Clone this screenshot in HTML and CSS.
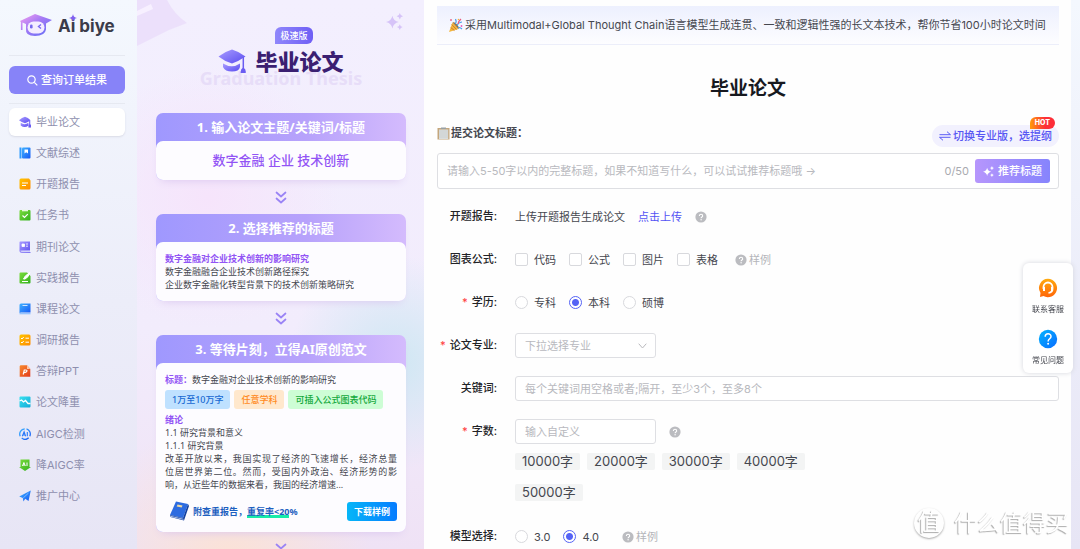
FILE: index.html
```
<!DOCTYPE html>
<html lang="zh-CN">
<head>
<meta charset="utf-8">
<title>Ai biye 毕业论文</title>
<link rel="stylesheet" href="styles.css">
</head>
<body>
<svg class="defs" aria-hidden="true">
  <defs>
    <linearGradient id="gp" x1="0" y1="0" x2="1" y2="1"><stop offset="0" stop-color="#a99cff"/><stop offset="1" stop-color="#5a4cf0"/></linearGradient>
    <linearGradient id="gb" x1="0" y1="0" x2="1" y2="1"><stop offset="0" stop-color="#3fb2ff"/><stop offset="1" stop-color="#1558f5"/></linearGradient>
    <linearGradient id="go" x1="0" y1="0" x2="1" y2="1"><stop offset="0" stop-color="#ffc400"/><stop offset="1" stop-color="#ff8a00"/></linearGradient>
    <linearGradient id="gg" x1="0" y1="0" x2="1" y2="1"><stop offset="0" stop-color="#7bdc3c"/><stop offset="1" stop-color="#32b01e"/></linearGradient>
    <linearGradient id="gr" x1="0" y1="0" x2="1" y2="1"><stop offset="0" stop-color="#f98a2b"/><stop offset="1" stop-color="#e23a1e"/></linearGradient>
    <linearGradient id="gc" x1="0" y1="0" x2="1" y2="1"><stop offset="0" stop-color="#39e2f0"/><stop offset="1" stop-color="#12a9d8"/></linearGradient>
    <linearGradient id="gl" x1="0" y1="0" x2="1" y2="1"><stop offset="0" stop-color="#f7a0f0"/><stop offset=".45" stop-color="#a47af5"/><stop offset="1" stop-color="#5b6cf6"/></linearGradient>
    <linearGradient id="gs" x1="0" y1="0" x2="0" y2="1"><stop offset="0" stop-color="#ffab10"/><stop offset="1" stop-color="#ff6508"/></linearGradient>
    <linearGradient id="gq" x1="0" y1="0" x2="1" y2="1"><stop offset="0" stop-color="#00b4ff"/><stop offset="1" stop-color="#0a6cff"/></linearGradient>
    <symbol id="chev" viewBox="0 0 12 13"><path d="M1.500 1.500 6 5.500l4.500-4M1.500 7.500 6 11.500l4.500-4" fill="none" stroke="#9a83f5" stroke-width="1.700" stroke-linecap="round" stroke-linejoin="round"/></symbol>
    <symbol id="help" viewBox="0 0 12 12"><circle cx="6" cy="6" r="5.600" fill="#bbbcc0"/><path d="M4.400 4.900c0-2.200 3.300-2.100 3.300 0 0 1.100-1.600 1.100-1.600 2.300" fill="none" stroke="#fff" stroke-width="1.100"/><circle cx="6.100" cy="8.700" r=".7" fill="#fff"/></symbol>
    <symbol id="spark" viewBox="0 0 16 16"><path d="M6 2.500q1 5 6 6-5 1-6 6-1-5-6-6 5-1 6-6ZM13 0q.5 2.500 3 3-2.500.5-3 3-.5-2.500-3-3 2.500-.5 3-3ZM13 10.500q.5 2.200 2.700 2.700-2.200.5-2.700 2.700-.5-2.200-2.700-2.700 2.200-.5 2.700-2.700Z" fill="currentColor"/></symbol>
    <symbol id="cap" viewBox="0 0 28 25"><path d="M.5 7.500Q7 2.500 14 .5q7 2 13.500 7Q21 12 14 14.500 6 12 .5 7.500Z" fill="url(#gp)"/><path d="M5 14.500q9 5.500 17 0V18q-1 4.500-8 4.500T5 18Z" fill="url(#gp)"/><path d="M25.300 8v12" stroke="#6a5cf2" stroke-width="1.500"/><path d="M25.300 18.500q3 1.500 2.400 5.500h-5q-.5-4 2.600-5.500Z" fill="#6a5cf2"/></symbol>
  </defs>
</svg>
<div class="app">
  <aside class="sidebar">
    <div class="logo">
      <svg width="34" height="24" viewBox="0 0 34 24"><path d="M1 8 16 1l17 6-6 3.500v6Q26 23 16 23T7 16v-5L3.500 9.500V17h-1.600V9Z" fill="url(#gl)"/><rect x="8.500" y="8.500" width="17" height="12" rx="6" fill="#f4edff"/><rect x="11" y="11.500" width="2.600" height="4" rx="1.300" fill="#7669ef"/><path d="m22 11.500-2.500 2 2.500 2" fill="none" stroke="#7669ef" stroke-width="1.400"/></svg>
      <span class="logo-text">Ai biye</span>
      <svg class="logo-star" width="8" height="8" viewBox="0 0 8 8"><path d="M4 0q.4 3.600 4 4-3.600.4-4 4-.4-3.600-4-4 3.600-.4 4-4Z" fill="#8060f0"/></svg>
    </div>
    <div class="query">
      <button class="query-btn" type="button"><svg width="11" height="11" viewBox="0 0 11 11"><circle cx="4.500" cy="4.500" r="3.700" fill="none" stroke="#fff" stroke-width="1.200"/><path d="m7.300 7.300 3 3" stroke="#fff" stroke-width="1.200"/></svg>查询订单结果</button>
    </div>
    <nav class="nav">
      <a class="nav-item active" href="#"><svg viewBox="0 0 28 28"><path d="M0 10Q7 4 14 2q7 2 13 8-6 5-13 7Q6 15 0 10Z" fill="url(#gp)"/><path d="M4 16q9 6 18 0v6q-9 7-18 0Z" fill="url(#gp)"/><path d="M25 11v10" stroke="#6a5cf2" stroke-width="2.500"/><path d="M22 20h6v7h-6z" fill="#6a5cf2"/></svg>毕业论文</a>
      <a class="nav-item" href="#"><svg viewBox="0 0 12 12"><path d="M.5.500h2v11h-2z" fill="#2f9bff"/><rect x="3" y=".5" width="8.500" height="11" rx="1" fill="url(#gb)"/><path d="M5.500 2.500h3.500v4L7.200 5.300 5.500 6.500Z" fill="#fff"/></svg>文献综述</a>
      <a class="nav-item" href="#"><svg viewBox="0 0 12 12"><path d="M2 .5h8l1.500 2V10a1.500 1.500 0 0 1-1.500 1.500H2A1.500 1.500 0 0 1 .5 10V2A1.500 1.500 0 0 1 2 .5Z" fill="url(#go)"/><path d="M3 5h6M3 7.500h4" stroke="#fff" stroke-width="1.200"/></svg>开题报告</a>
      <a class="nav-item" href="#"><svg viewBox="0 0 12 12"><rect x=".5" y="1" width="11" height="10.500" rx="1" fill="url(#gg)"/><path d="M3 1.500h6" stroke="#e6f8dc" stroke-width="1.600"/><path d="m3.500 6.500 2 2 3.300-3.300" fill="none" stroke="#fff" stroke-width="1.200"/></svg>任务书</a>
      <a class="nav-item" href="#"><svg viewBox="0 0 12 12"><path d="M1 .5h10V9H3q-1.500 0-1.500 1T3 11h8.500v.7H2.500Q.5 11.500.5 10V1Z" fill="url(#gp)"/><path d="M2 9.800h9" stroke="#8f85f8"/><path d="M3 3h2.500v2.500H3zM7 3h2M7 5.200h2" fill="#fff" stroke="#fff" stroke-width=".8"/></svg>期刊论文</a>
      <a class="nav-item" href="#"><svg viewBox="0 0 12 12"><path d="M1.500.5H8L11.500 4v6.500a1 1 0 0 1-1 1h-9a1 1 0 0 1-1-1v-9a1 1 0 0 1 1-1Z" fill="url(#gg)"/><path d="M4.500 7Q5 4 11 .5 9.500 5.500 6 7ZM3 9.500h6" stroke="#fff" stroke-width="1" fill="#fff"/></svg>实践报告</a>
      <a class="nav-item" href="#"><svg viewBox="0 0 12 12"><path d="M2 .5h9.500v9H2Q1 9.500.5 10V2Q.5.500 2 .5Z" fill="url(#gb)"/><path d="M.5 10.700h11" stroke="#8cc0ff" stroke-width="1.200"/><path d="M3.500 2.500h5" stroke="#cfe5ff"/></svg>课程论文</a>
      <a class="nav-item" href="#"><svg viewBox="0 0 12 12"><rect x=".5" y=".5" width="11" height="11" rx="1.500" fill="url(#go)"/><path d="m2 4 1 1 1.700-2M2 8l1 1 1.700-2M6.500 4.200H10M6.500 8.200H10" fill="none" stroke="#fff"/></svg>调研报告</a>
      <a class="nav-item" href="#"><svg viewBox="0 0 12 12"><path d="M1.500.2H8L11.300 4v7.800H.7V1Z" fill="url(#gr)"/><path d="M8 .2V4h3.300Z" fill="#ffc6a0"/><path d="M4.200 9.500 5.300 5h1.500q1.500 0 1 1.300T5 7.600" fill="none" stroke="#fff" stroke-width="1.200"/></svg>答辩PPT</a>
      <a class="nav-item" href="#"><svg viewBox="0 0 12 12"><rect x=".5" y=".5" width="11" height="11" rx="1" fill="url(#gc)"/><path d="m.5 5 2-1 2 2 2-1.500L9 7.500h2.500" fill="none" stroke="#fff" stroke-width="1.300"/></svg>论文降重</a>
      <a class="nav-item" href="#"><svg viewBox="0 0 12 12"><path d="M7.500.9a5.300 5.300 0 0 1 3.300 7.300M9.700 9.800a5.300 5.300 0 0 1-7 .3M1.200 8.300A5.300 5.300 0 0 1 5.700.8" fill="none" stroke="url(#gb)" stroke-width="1.300"/><path d="m3.300 8.200 1.800-4.300 1.500 4.300M4 7h2M8.300 4v4.200" fill="none" stroke="#2677fa" stroke-width="1.100"/></svg>AIGC检测</a>
      <a class="nav-item" href="#"><svg viewBox="0 0 12 12"><path d="M1.500.5h9V8H12l-6 4-6-4h1.500Z" fill="url(#gg)"/><path d="m3.500 7 1.400-3.500L6.300 7M4 6h1.700M8 3.500V7" fill="none" stroke="#fff"/></svg>降AIGC率</a>
      <a class="nav-item" href="#"><svg viewBox="0 0 12 12"><path d="M11.800.5 9.500 11 6.200 8.800 4.500 11.500 3.800 8 .2 6.500Z" fill="url(#gb)"/><path d="m9.500 3-5.300 5" stroke="#9fd0ff" stroke-width=".7"/></svg>推广中心</a>
    </nav>
  </aside>

  <section class="promo">
    <svg class="promo-decor" width="50" height="46" viewBox="0 0 50 46"><path d="M0 0h30q7 14 20 23L32 30 0 46Z" fill="#e8daf9" opacity=".7"/><path d="m0 11 14-7 2 5-16 7Z" fill="#f7f0ff"/></svg>
    <svg class="promo-spark" width="17" height="17"><use href="#spark"/></svg>
    <header class="promo-head">
      <span class="speed">极速版</span>
      <div class="promo-title"><svg width="28" height="25"><use href="#cap"/></svg>毕业论文</div>
      <div class="promo-en">Graduation Thesis</div>
    </header>
    <div class="steps">
      <article class="card">
        <h3>1. 输入论文主题/关键词/标题</h3>
        <div class="card-body keywords">数字金融 企业 技术创新</div>
      </article>
      <svg class="chev"><use href="#chev"/></svg>
      <article class="card">
        <h3>2. 选择推荐的标题</h3>
        <div class="card-body titles"><b>数字金融对企业技术创新的影响研究</b><span>数字金融融合企业技术创新路径探究</span><span>企业数字金融化转型背景下的技术创新策略研究</span></div>
      </article>
      <svg class="chev"><use href="#chev"/></svg>
      <article class="card">
        <h3>3. 等待片刻，立得AI原创范文</h3>
        <div class="card-body sample">
          <div><b>标题：</b>数字金融对企业技术创新的影响研究</div>
          <div class="pills"><span class="pill blue">1万至10万字</span><span class="pill orange">任意学科</span><span class="pill green">可插入公式图表代码</span></div>
          <div><b>绪论</b></div>
          <div>1.1 研究背景和意义</div>
          <div>1.1.1 研究背景</div>
          <div class="full">改革开放以来，我国实现了经济的飞速增长，经济总量</div>
          <div class="full">位居世界第二位。然而，受国内外政治、经济形势的影</div>
          <div>响，从近些年的数据来看，我国的经济增速...</div>
          <div class="card-foot">
            <svg width="20" height="20" viewBox="0 0 20 20"><path d="M7 .5 19 3 14 17 1 14Z" fill="#2c6be0"/><path d="m1 14 13 3 5-14 1 2-5 14.500L1.500 16Z" fill="#12409f"/><path d="m1.500 15.300 13 3" stroke="#d5e5ff" stroke-width=".8"/><path d="m8.500 3.500 5 1-.8 2-5-1Z" fill="#ecd9a2"/></svg>
            <strong>附查重报告，<span class="mark">重复率&lt;20</span>%</strong>
            <button type="button">下载样例</button>
          </div>
        </div>
      </article>
      <svg class="chev"><use href="#chev"/></svg>
    </div>
  </section>

  <main class="main">
    <div class="banner">
      <svg width="15" height="15" viewBox="0 0 15 15"><path d="m1 14 3.500-9.500 6 6.500Z" fill="#f3b63c"/><path d="m2.700 9.500 3.700 3M3.700 6.500l4.800 5" stroke="#cf7a31"/><path d="M4.500 4.500q2-.8 4.500 2t1.500 4.500" fill="#a36a2c"/><path d="M7 6q2-2 .5-5M9 8q1-3.500 5-4M10 10q2-1 4 1" fill="none" stroke="#4c9fe8" stroke-width="1.200"/><path d="M10 6q.5-3 3-5" fill="none" stroke="#e85a7d" stroke-width="1.300"/><circle cx="3" cy="2" r="1" fill="#ed6b8a"/><circle cx="13.500" cy="8" r=".9" fill="#e85aba"/><circle cx="10.500" cy="1.500" r=".8" fill="#f3b63c"/></svg>
      <span>采用Multimodal+Global Thought Chain语言模型生成连贯、一致和逻辑性强的长文本技术，帮你节省100小时论文时间</span>
    </div>
    <h1>毕业论文</h1>
    <form class="form">
      <div class="topic-bar">
        <label for="topic"><svg width="13" height="13" viewBox="0 0 13 13"><path d="M.5 1h12v11.500H.5z" fill="#c4a67c"/><path d="M2 2.500h9.200V12H2z" fill="#d9dddd"/><path d="M2 4h9M2 6h9M2 8h9M2 10h9" stroke="#c0c6c6" stroke-width=".5"/><path d="M4 .5h5V2H4z" fill="#98a0a4"/></svg>提交论文标题：</label>
        <button class="switch" type="button"><svg width="12" height="10" viewBox="0 0 12 10"><path d="M.5 3.700h11L8 .7M11.500 6.300H.5l3.500 3" fill="none" stroke="#5b5cf6" stroke-width="1"/></svg>切换专业版，选提纲<span class="hot">HOT</span></button>
      </div>
      <div class="topic-box">
        <input id="topic" type="text" placeholder="请输入5-50字以内的完整标题，如果不知道写什么，可以试试推荐标题哦 →">
        <span class="count">0/50</span>
        <button type="button"><svg width="11" height="11"><use href="#spark"/></svg>推荐标题</button>
      </div>
      <div class="rows">
        <span class="label">开题报告:</span>
        <div class="field"><span>上传开题报告生成论文</span><a class="upload" href="#">点击上传</a><svg class="help"><use href="#help"/></svg></div>

        <span class="label">图表公式:</span>
        <div class="field options">
          <label><input type="checkbox">代码</label><label><input type="checkbox">公式</label><label><input type="checkbox">图片</label><label><input type="checkbox">表格</label>
          <a class="example" href="#"><svg class="help"><use href="#help"/></svg>样例</a>
        </div>

        <span class="label required">学历:</span>
        <div class="field options">
          <label><input type="radio" name="degree">专科</label><label><input type="radio" name="degree" checked>本科</label><label><input type="radio" name="degree">硕博</label>
        </div>

        <label class="label required" for="major">论文专业:</label>
        <div class="field"><span class="select"><select id="major"><option>下拉选择专业</option></select><svg width="9" height="6" viewBox="0 0 9 6"><path d="m.7.700 3.800 4.300L8.300.7" fill="none" stroke="#b9b9bd"/></svg></span></div>

        <label class="label" for="keys">关键词:</label>
        <div class="field"><input class="text" id="keys" type="text" placeholder="每个关键词用空格或者;隔开，至少3个，至多8个"></div>

        <label class="label required" for="words">字数:</label>
        <div class="field-stack">
          <div class="field"><input class="text short" id="words" type="text" placeholder="输入自定义"><svg class="help"><use href="#help"/></svg></div>
          <div class="counts"><button type="button">10000字</button><button type="button">20000字</button><button type="button">30000字</button><button type="button">40000字</button><button type="button">50000字</button></div>
        </div>

        <span class="label">模型选择:</span>
        <div class="field options model">
          <label><input type="radio" name="model">3.0</label><label><input type="radio" name="model" checked>4.0</label>
          <a class="example" href="#"><svg class="help"><use href="#help"/></svg>样例</a>
        </div>
      </div>
    </form>
  </main>
</div>
<div class="float">
  <a href="#"><svg width="20" height="20" viewBox="0 0 20 20"><path d="M10 .8a9.200 9.200 0 1 1-4.500 17.300L2 19l.5-4A9.200 9.200 0 0 1 10 .8Z" fill="url(#gs)"/><path d="M5.500 11V9a4.500 4.500 0 0 1 9 0v2q0 3.500-4 3.800" fill="none" stroke="#fff" stroke-width="1.800"/><path d="M5 9h2v4H5zM13 9h2v4h-2z" fill="#fff"/></svg>联系客服</a>
  <a href="#"><svg width="20" height="20" viewBox="0 0 20 20"><circle cx="10" cy="10" r="9.200" fill="url(#gq)"/><path d="M7.200 7.700c0-3.800 5.800-3.700 5.800-.2 0 2.200-2.900 2.300-2.900 4.900" fill="none" stroke="#fff" stroke-width="1.500"/><circle cx="10.100" cy="14.800" r="1" fill="#fff"/></svg>常见问题</a>
</div>
<div class="stamp"><span class="stamp-dot">值</span><span>什么值得买</span></div>
</body>
</html>
```
FILE: styles.css
```
* { box-sizing: border-box; }
body {
  margin: 0;
  font: 11px/18px Inter, "Noto Sans CJK SC", sans-serif;
  color: #45474f;
  background: linear-gradient(#f4f8fe, #ecedf9 55%, #e7e5f5);
}
a { color: inherit; text-decoration: none; }
button, input, select { font: inherit; color: inherit; margin: 0; }
button { border: 0; padding: 0; cursor: pointer; white-space: nowrap; }
svg { flex: none; }
.defs { position: absolute; width: 0; height: 0; }
.app {
  display: grid;
  grid-template-columns: 137px 287px minmax(0, 1fr);
  height: 100vh;
  min-height: 540px;
  overflow: hidden;
  padding-right: 9px;
}

/* Sidebar */
.sidebar { display: flex; flex-direction: column; padding: 0 12px 39px 9px; min-height: 0; }
.logo {
  position: relative;
  display: flex;
  align-items: center;
  gap: 5px;
  height: 55px;
  padding: 0 0 6px 10px;
}
.logo-text { font-size: 17px; font-weight: 700; color: #3b3c4a; line-height: 24px; padding-top: 3px; }
.logo-star { position: absolute; left: 60px; top: 14px; }
.query { padding: 10px 0 9px; border: 1px solid #e6e9f1; border-width: 1px 0; }
.query-btn {
  display: flex;
  align-items: center;
  justify-content: center;
  gap: 3px;
  width: 100%;
  height: 28px;
  border-radius: 6px;
  background: #8783f8;
  color: #fff;
  font-weight: 500;
}
.nav {
  flex: 1;
  display: flex;
  flex-direction: column;
  justify-content: space-between;
  padding-top: 4px;
}
.nav-item {
  display: flex;
  align-items: center;
  gap: 5px;
  height: 28px;
  padding-left: 10px;
  border-radius: 6px;
  color: #8e8fae;
}
.nav-item svg { width: 12px; height: 12px; }
.nav-item.active { background: #fff; box-shadow: 0 1px 2px #d9dbe6; }

/* Promo column */
.promo {
  position: relative;
  padding: 27px 18px 0 19px;
  overflow: hidden;
  font-family: "Noto Sans", "Noto Sans CJK SC", sans-serif;
  background:
    radial-gradient(circle at 25% 36%, #f6e4fb, transparent 32%),
    radial-gradient(circle at 90% 66%, #cfe7f3, transparent 24%),
    radial-gradient(circle at 32% 102%, #fbe2d6, transparent 24%),
    linear-gradient(#f3effe, #f2ecfc 60%, #efe2f5);
}
.promo-decor { position: absolute; left: 0; top: 0; }
.promo-spark { position: absolute; right: 21px; top: 13px; color: #d6c3f8; }
.promo-head { display: flex; flex-direction: column; align-items: center; height: 86px; }
.speed {
  margin-left: 26px;
  padding: 0 5px;
  border-radius: 6px 6px 6px 0;
  background: linear-gradient(90deg, #8f86fb, #6f5ff5);
  color: #fff;
  font-size: 9px;
  font-weight: 500;
  line-height: 17px;
}
.promo-title {
  position: relative;
  z-index: 1;
  display: flex;
  align-items: center;
  gap: 9px;
  font-size: 22px;
  font-weight: 900;
  line-height: 34px;
  color: #3b1f72;
}
.promo-en { margin-top: -10px; font-size: 18px; font-weight: 700; line-height: 20px; color: #e7ddf8; }
.steps { display: flex; flex-direction: column; align-items: center; }
.card {
  width: 100%;
  border-radius: 7px;
  background: linear-gradient(90deg, #9f98fe, #b7a2fb 60%, #d4bbfd);
  box-shadow: 0 5px 10px -5px #d8c5ee;
}
.card h3 { margin: 0; font-size: 13px; font-weight: 700; line-height: 28px; color: #fff; text-align: center; }
.card-body { padding: 10px 9px; border-radius: 7px; background: #fdfcff; font-size: 9px; line-height: 13px; }
.card-body b { color: #9254f5; font-weight: 700; }
.keywords { padding: 9px; font-size: 13px; font-weight: 500; line-height: 21px; color: #9254f5; text-align: center; }
.titles { display: flex; flex-direction: column; }
.chev { width: 12px; height: 13px; margin: 11px 0 10px; }
.pills { display: flex; gap: 4px; margin: 4px 0; }
.pill { padding: 0 7px; border-radius: 3px; line-height: 19px; font-weight: 500; }
.blue { background: #bfe1ff; color: #1769d2; }
.orange { background: #ffe8cd; color: #ff8b1e; }
.green { background: #cdfdd5; color: #13a83b; }
.full { text-align-last: justify; }
.card-foot { display: flex; align-items: center; gap: 4px; padding: 10px 0 1px 4px; }
.card-foot strong { margin-right: auto; color: #1d5fc0; font-weight: 700; white-space: nowrap; }
.mark { background: linear-gradient(#18eba9, #18eba9) 0 100% / 100% 3px no-repeat; }
.card-foot button {
  width: 50px;
  height: 19px;
  border-radius: 3px;
  background: linear-gradient(90deg, #06b6f8, #067cff);
  color: #fff;
  font-weight: 700;
}

/* Main form */
.main { padding: 6px 12px 0 13px; background: #fefefe; overflow: hidden; }
.banner {
  display: flex;
  align-items: center;
  gap: 2px;
  height: 39px;
  padding: 0 11px;
  border-bottom: 1px solid #eceefa;
  background: linear-gradient(#edf0fe, #fdfdff);
  white-space: nowrap;
}
h1 { margin: 30px 0 21px; font-size: 19px; font-weight: 700; line-height: 28px; color: #17191f; text-align: center; }
.topic-bar { display: flex; align-items: center; justify-content: space-between; }
.topic-bar label { display: flex; align-items: center; gap: 1px; font-weight: 700; padding-bottom: 5px; }
.switch {
  position: relative;
  display: flex;
  align-items: center;
  gap: 2px;
  height: 22px;
  padding: 0 7px;
  border-radius: 11px;
  background: #f2f1fe;
  color: #5755f3;
  font-weight: 500;
}
.hot {
  position: absolute;
  right: 4px;
  top: -8px;
  padding: 0 5px;
  border-radius: 6px 6px 6px 0;
  background: linear-gradient(90deg, #ff9a0a, #fd2e38 60%);
  color: #fff;
  font-size: 7px;
  font-weight: 800;
  line-height: 12px;
}
.topic-box {
  display: flex;
  align-items: center;
  gap: 6px;
  height: 36px;
  margin-top: 6px;
  padding: 0 8px 0 9px;
  border: 1px solid #dedfe3;
  border-radius: 3px;
  background: #fff;
}
.topic-box input { flex: 1; min-width: 0; border: 0; padding: 0; outline: 0; background: none; }
::placeholder { color: #b8b9be; opacity: 1; }
.count { color: #a9aab0; }
.topic-box button {
  display: flex;
  align-items: center;
  gap: 4px;
  height: 24px;
  padding: 0 8px;
  border-radius: 3px;
  background: linear-gradient(90deg, #b696fc, #8684fd);
  color: #fff;
  font-weight: 500;
}
.rows { display: grid; grid-template-columns: 60px minmax(0, 1fr); gap: 18px; margin-top: 15px; }
.label { line-height: 25px; text-align: right; color: #222327; font-weight: 500; white-space: nowrap; }
.required::before { content: "*"; margin-right: 4px; color: #ff4040; }
.field { display: flex; align-items: center; height: 25px; gap: 13px; white-space: nowrap; }
.upload { color: #5453f4; }
.help { width: 12px; height: 12px; }
.options label { display: flex; align-items: center; gap: 6px; }
.options input {
  appearance: none;
  width: 13px;
  height: 13px;
  border: 1px solid #d8d9dd;
  border-radius: 2px;
  background: #fff;
}
.options input[type="radio"] { border-radius: 50%; }
.options input[type="radio"]:checked {
  border-color: #5563f5;
  background: radial-gradient(circle, #5563f5 3px, #fff 4px);
}
.example { display: flex; align-items: center; gap: 2px; margin-left: 4px; color: #b4b5ba; }
.model .example { margin-left: 10px; }
.select { position: relative; display: flex; width: 141px; }
.select svg { position: absolute; right: 9px; top: 10px; pointer-events: none; }
select, .text {
  appearance: none;
  width: 100%;
  height: 25px;
  padding: 0 9px;
  border: 1px solid #dedfe3;
  border-radius: 3px;
  background: #fff;
}
select { color: #b8b9be; }
.text.short { width: 141px; }
.counts { display: flex; flex-wrap: wrap; gap: 14px 7px; max-width: 300px; padding: 9px 0 5px; }
.counts button {
  height: 17px;
  padding: 0 7px;
  border-radius: 2px;
  background: #f3f4f4;
  font-size: 13px;
  line-height: 17px;
}

/* Overlays */
.float {
  position: fixed;
  right: 7px;
  top: 263px;
  display: flex;
  flex-direction: column;
  gap: 13px;
  width: 50px;
  padding: 15px 0 6px;
  border-radius: 6px;
  background: #fff;
  box-shadow: 0 0 5px #d5d6dd;
}
.float a {
  display: flex;
  flex-direction: column;
  align-items: center;
  gap: 5px;
  font-size: 8px;
  line-height: 13px;
}
.stamp {
  position: fixed;
  right: 11px;
  bottom: 10px;
  display: flex;
  align-items: center;
  gap: 10px;
  font-size: 23px;
  line-height: 32px;
  color: #fff;
  text-shadow: -1px 1px 1px #aaa;
  pointer-events: none;
}
.stamp-dot {
  width: 30px;
  height: 30px;
  border-radius: 50%;
  box-shadow: 0 1px 2px #aaa;
  line-height: 28px;
  text-align: center;
}
```
